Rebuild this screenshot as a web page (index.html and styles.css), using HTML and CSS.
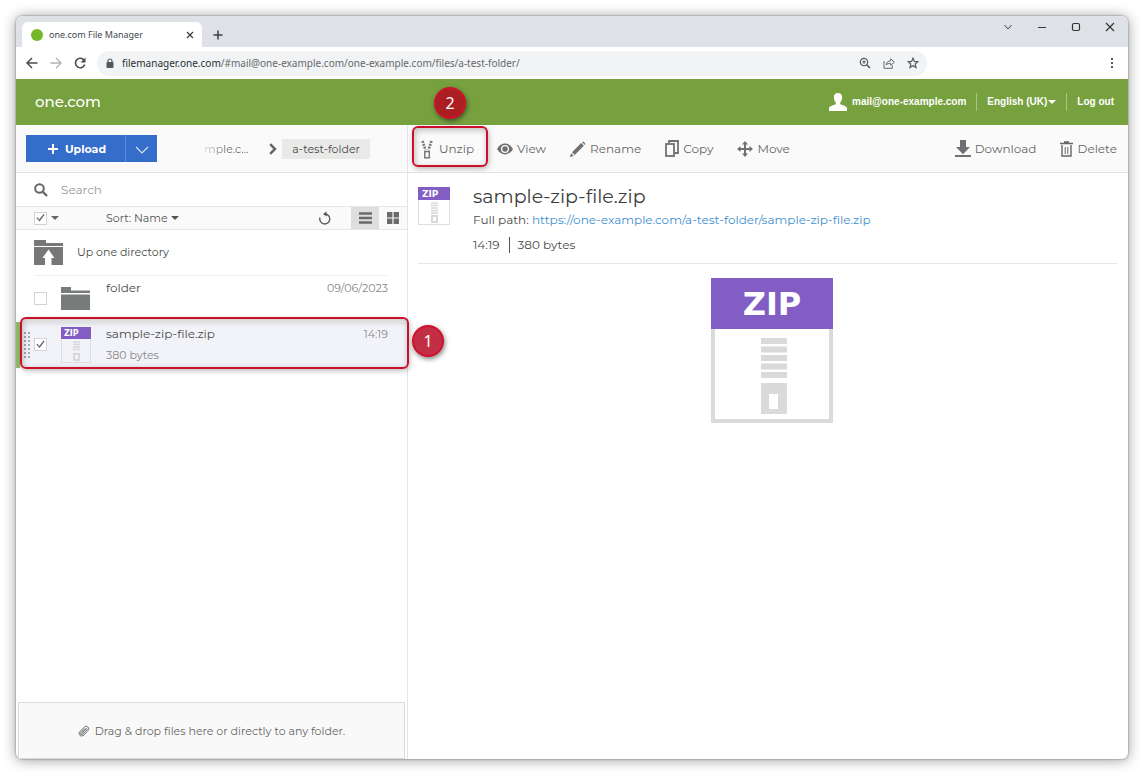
FILE: index.html
```html
<!DOCTYPE html>
<html lang="en">
<head>
<meta charset="utf-8">
<title>one.com File Manager</title>
<link rel="stylesheet" href="styles.css">
</head>
<body>
<div class="window">
  <header class="tabstrip">
    <div class="tab">
      <span class="favicon"></span>
      <span class="tab-title">one.com File Manager</span>
      <button class="plain" aria-label="Close tab"><svg width="8" height="8" viewBox="0 0 8 8"><path d="M1 1l6 6M7 1l-6 6" stroke="#3c4043" stroke-width="1.300"/></svg></button>
    </div>
    <button class="plain new-tab" aria-label="New tab"><svg width="10" height="10" viewBox="0 0 10 10"><path d="M5 .5v9M.5 5h9" stroke="#3c4043" stroke-width="1.500"/></svg></button>
    <div class="window-buttons">
      <button class="plain" aria-label="Search tabs"><svg width="10" height="10" viewBox="0 0 10 10"><path d="M1.500 3L5 7l3.500-4" fill="none" stroke="#444"/></svg></button>
      <button class="plain" aria-label="Minimise"><svg width="10" height="10" viewBox="0 0 10 10"><path d="M1 5.500h8" stroke="#333"/></svg></button>
      <button class="plain" aria-label="Maximise"><svg width="10" height="10" viewBox="0 0 10 10"><rect x="1.500" y="1.500" width="7" height="7" rx="1.500" fill="none" stroke="#333" stroke-width="1.200"/></svg></button>
      <button class="plain" aria-label="Close"><svg width="10" height="10" viewBox="0 0 10 10"><path d="M1 1l8 8M9 1L1 9" stroke="#333" stroke-width="1.200"/></svg></button>
    </div>
  </header>

  <div class="navbar">
    <button class="plain" aria-label="Back"><svg width="12" height="12" viewBox="0 0 12 12"><path d="M11.500 6H1.500M6 1L1 6l5 5" fill="none" stroke="#4a4d51" stroke-width="1.500"/></svg></button>
    <button class="plain" aria-label="Forward"><svg width="12" height="12" viewBox="0 0 12 12"><path d="M.5 6h10M6 1l5 5-5 5" fill="none" stroke="#b0b2b5" stroke-width="1.300"/></svg></button>
    <button class="plain" aria-label="Reload"><svg width="12" height="12" viewBox="0 0 12 12"><path d="M10 3.200A4.700 4.700 0 1 0 10.700 7.500" fill="none" stroke="#4a4d51" stroke-width="1.600"/><path d="M11.500.5v5h-5z" fill="#4a4d51"/></svg></button>
    <div class="address">
      <svg width="8" height="11" viewBox="0 0 8 11"><path d="M2 5V3a2 2 0 0 1 4 0v2" fill="none" stroke="#55585c" stroke-width="1.200"/><rect x=".5" y="4" width="7" height="6" rx="1" fill="#55585c"/></svg>
      <span class="url"><span class="host">filemanager.one.com</span>/#mail@one-example.com/one-example.com/files/a-test-folder/</span>
      <button class="plain" aria-label="Zoom"><svg width="12" height="12" viewBox="0 0 12 12"><circle cx="5" cy="5" r="3.700" fill="none" stroke="#55585c" stroke-width="1.200"/><path d="M7.700 7.700l3.300 3.300" stroke="#55585c" stroke-width="1.600"/><path d="M5 3.200v3.600M3.200 5h3.600" stroke="#55585c"/></svg></button>
      <button class="plain" aria-label="Share"><svg width="12" height="12" viewBox="0 0 12 12"><path d="M1 4v7.300h8.300V8.500" fill="none" stroke="#66696d"/><path d="M3.200 8C3.600 5 5 4 7.700 3.900V1.800l3.700 3.400-3.700 3.200V6.400C5.600 6.400 4.200 6.800 3.200 8z" fill="none" stroke="#66696d"/></svg></button>
      <button class="plain" aria-label="Bookmark"><svg width="12" height="12" viewBox="0 0 12 12"><path d="M6 1.200l1.400 3.200 3.500.3-2.700 2.300.8 3.500L6 8.700l-3 1.800L3.800 7 1.100 4.700l3.500-.3z" fill="none" stroke="#55585c" stroke-width="1.200"/></svg></button>
    </div>
    <button class="plain more" aria-label="Menu"><svg width="4" height="12" viewBox="0 0 4 12"><path d="M1 1h2v2H1zM1 5h2v2H1zM1 9h2v2H1z" fill="#55585c"/></svg></button>
  </div>

  <div class="brandbar">
    <span class="brand">one.com</span>
    <span class="callout callout-two">2</span>
    <nav class="account">
      <a href="#account" class="user"><svg width="18" height="18" viewBox="0 0 18 18"><path d="M9 0c2.700 0 4.200 1.700 4.200 4.300 0 2.200-.9 4.200-2 5.200v1.800c2 1 6.800 1.500 6.800 4.200V18H0v-2.500c0-2.700 4.800-3.200 6.800-4.200V9.500c-1.100-1-2-3-2-5.200C4.800 1.700 6.300 0 9 0z" fill="#fff"/></svg>mail@one-example.com</a>
      <button class="language">English (UK)<span class="caret"></span></button>
      <a href="#logout" class="logout">Log out</a>
    </nav>
  </div>

  <div class="panes">
    <aside class="sidebar">
      <div class="side-tools">
        <div class="upload">
          <button class="upload-main"><svg width="10" height="10" viewBox="0 0 10 10"><path d="M5 0v10M0 5h10" stroke="#fff" stroke-width="2"/></svg>Upload</button>
          <button class="upload-more" aria-label="More upload options"><svg width="14" height="8" viewBox="0 0 14 8"><path d="M1 1l6 6 6-6" fill="none" stroke="#dce6f7" stroke-width="1.100"/></svg></button>
        </div>
        <nav class="crumbs">
          <a href="#root" class="crumb-cut">mple.c...</a>
          <svg width="8" height="12" viewBox="0 0 8 12"><path d="M1.200 1.200L6 6 1.200 10.800" fill="none" stroke="#666" stroke-width="2.500"/></svg>
          <a href="#folder" class="crumb-here">a-test-folder</a>
        </nav>
      </div>
      <label class="search">
        <svg width="14" height="14" viewBox="0 0 14 14"><circle cx="5.500" cy="5.500" r="4.300" fill="none" stroke="#666" stroke-width="2"/><path d="M8.800 8.800l4.200 4.200" stroke="#666" stroke-width="2.300"/></svg>
        <input type="search" placeholder="Search" aria-label="Search">
      </label>
      <div class="sortbar">
        <input type="checkbox" class="check" checked aria-label="Select all">
        <span class="caret"></span>
        <button class="plain sort">Sort: Name<span class="caret"></span></button>
        <button class="plain refresh" aria-label="Refresh"><svg width="12" height="14" viewBox="0 0 12 14"><path d="M1 6.500A5 5 0 1 0 6 3" fill="none" stroke="#555" stroke-width="1.300"/><path d="M7.500.5v5L4 3z" fill="#555"/></svg></button>
        <button class="plain view active" aria-label="List view"><svg width="13" height="12" viewBox="0 0 13 12"><path d="M0 1.500h13M0 6h13M0 10.500h13" stroke="#6b6b6b" stroke-width="2.400"/></svg></button>
        <button class="plain view" aria-label="Grid view"><svg width="12" height="12" viewBox="0 0 12 12"><path d="M0 0h5.400v5.400H0zM6.600 0H12v5.400H6.600zM0 6.600h5.400V12H0zM6.600 6.600H12V12H6.600z" fill="#6b6b6b"/></svg></button>
      </div>

      <ul class="files">
        <li class="row up">
          <svg width="29" height="25" viewBox="0 0 29 25"><path d="M0 0h12v3h17v3H0zM0 7h29v18H17.500v-7H20.500L14.500 9.500 8.500 18H11v7H0z" fill="#777"/></svg>
          <a href="#up">Up one directory</a>
        </li>
        <li class="row directory">
          <input type="checkbox" class="check" aria-label="Select folder">
          <svg class="thumb" width="30" height="23" viewBox="0 0 30 23"><path d="M0 0h10v3.500h19V6H0zM0 7.500h29V23H0z" fill="#777b7a"/></svg>
          <div class="info"><span class="name">folder</span></div>
          <time>09/06/2023</time>
        </li>
        <li class="row selected">
          <span class="grip"></span>
          <input type="checkbox" class="check" checked aria-label="Select sample-zip-file.zip">
          <svg class="thumb" width="30" height="36" viewBox="0 0 30 36">
            <rect x=".5" y=".5" width="29" height="35" fill="none" stroke="#dedede"/>
            <rect width="30" height="12" fill="#825dc3"/>
            <path d="M12 15h7M12 17.500h7M12 20h7M12 22.500h7" stroke="#d8d8d8" stroke-width="1.500"/>
            <rect x="13" y="27" width="5" height="6" fill="none" stroke="#d8d8d8" stroke-width="2"/>
            <text x="3" y="9" class="zip-text" font-size="8">ZIP</text>
          </svg>
          <div class="info"><span class="name">sample-zip-file.zip</span><span class="size">380 bytes</span></div>
          <time>14:19</time>
          <span class="outline"></span>
          <span class="callout callout-one">1</span>
        </li>
      </ul>

      <div class="dropzone">
        <svg width="12" height="12" viewBox="0 0 12 12"><path d="M3.500 8.300L7.900 4c.8-.8 1.700.2 1 1L4.700 9.100C3.200 10.500 1.700 9 3 7.500L7 3.400M9.500 6.300L6 9.900C3 12.700-.6 9.300 2 6.500L6.300 2.200C8.700-.2 12.300 3 9.900 5.700" fill="none" stroke="#555" stroke-width=".9"/></svg>
        Drag &amp; drop files here or directly to any folder.
      </div>
    </aside>

    <main class="detail">
      <div class="actions">
        <button class="action unzip"><svg width="12" height="19" viewBox="0 0 12 19"><path d="M1.500 1l3 9M10.500 1l-3 9" stroke="#777" stroke-width="2.600" stroke-dasharray="2 1" fill="none"/><rect x="3.800" y="11.500" width="4.500" height="6.300" fill="none" stroke="#777" stroke-width="1.500"/></svg>Unzip<span class="outline"></span></button>
        <button class="action"><svg width="16" height="12" viewBox="0 0 16 12"><path d="M0 6C4-1.200 12-1.200 16 6 12 13.200 4 13.200 0 6z" fill="#707070"/><circle cx="8" cy="6" r="4" fill="#fafafa"/><circle cx="8" cy="6" r="2.700" fill="#707070"/></svg>View</button>
        <button class="action"><svg width="16" height="16" viewBox="0 0 16 16"><path d="M0 16l1-3.800 2.800 2.800zM2 11.300L11.200 2.100 13.900 4.800 4.700 14zM12.100 1.200c1-1.600 4.200 1.400 2.700 2.700z" fill="#707070"/></svg>Rename</button>
        <button class="action"><svg width="14" height="17" viewBox="0 0 14 17"><path d="M4 3V1h9v12h-3" fill="none" stroke="#707070" stroke-width="1.800"/><rect x="1" y="4" width="8" height="12" fill="none" stroke="#707070" stroke-width="1.800"/></svg>Copy</button>
        <button class="action"><svg width="16" height="16" viewBox="0 0 16 16"><path d="M8 2v12M2 8h12" stroke="#707070" stroke-width="2"/><path d="M8 0l3 3.500H5zM8 16l3-3.500H5zM0 8l3.500-3v6zM16 8l-3.500-3v6z" fill="#707070"/></svg>Move</button>
        <button class="action download"><svg width="16" height="17" viewBox="0 0 16 17"><path d="M5 0h6v7h4l-7 7.300L1 7h4zM0 15h16v2H0z" fill="#707070"/></svg>Download</button>
        <button class="action"><svg width="13" height="16" viewBox="0 0 13 16"><path d="M0 2.500h13M4 1h5" stroke="#666" stroke-width="1.600"/><path d="M2 4v11h9V4" fill="none" stroke="#666" stroke-width="1.400"/><path d="M5.200 6v7M7.800 6v7" stroke="#666"/></svg>Delete</button>
      </div>

      <section class="content">
        <div class="summary">
          <svg width="32" height="38" viewBox="0 0 32 38">
            <rect x=".5" y=".5" width="31" height="37" fill="none" stroke="#dedede"/>
            <rect width="32" height="13" fill="#825dc3"/>
            <path d="M13 16h7M13 18.500h7M13 21h7M13 23.500h7M13 26h7" stroke="#d8d8d8" stroke-width="1.500"/>
            <rect x="14" y="29" width="5" height="6" fill="none" stroke="#d8d8d8" stroke-width="2"/>
            <text x="4" y="10" class="zip-text" font-size="9">ZIP</text>
          </svg>
          <div class="meta">
            <h1>sample-zip-file.zip</h1>
            <p>Full path: <a href="#file">https://one-example.com/a-test-folder/sample-zip-file.zip</a></p>
            <p class="facts"><span>14:19</span><span>380 bytes</span></p>
          </div>
        </div>
        <svg class="preview" width="122" height="145" viewBox="0 0 122 145">
          <rect x="2" y="2" width="118" height="141" fill="#fff" stroke="#dadada" stroke-width="4"/>
          <rect width="122" height="51" fill="#825dc3"/>
          <path d="M50 63h26M50 71.500h26M50 80h26M50 88.500h26M50 97h26" stroke="#dadada" stroke-width="6"/>
          <path fill-rule="evenodd" d="M50 105h26v31H50zM58 116v15h9v-15z" fill="#dadada"/>
          <text x="61" y="37" class="zip-text zip-large" text-anchor="middle">ZIP</text>
        </svg>
      </section>
    </main>
  </div>
</div>
</body>
</html>
```
FILE: styles.css
```css
* { box-sizing: border-box; }

body {
  margin: 0;
  padding: 16px;
  min-height: 100vh;
  display: flex;
  background: #fff;
  color: #4a4a4a;
  font: 12px/16px Montserrat, Inter, sans-serif;
}

button, input { font: inherit; color: inherit; }
button { border: 0; cursor: pointer; }
a { color: inherit; text-decoration: none; }
svg { flex: none; display: block; }
.plain { background: none; padding: 0; display: flex; align-items: center; justify-content: center; }
.zip-text { font-family: "DejaVu Sans", sans-serif; font-weight: bold; fill: #fff; }
.zip-large { font-size: 32px; }
.caret { border: 4px solid transparent; border-top-color: currentColor; border-bottom: 0; }

.window {
  flex: 1;
  min-width: 0;
  display: flex;
  flex-direction: column;
  background: #fff;
  border-radius: 6px;
  box-shadow: 0 0 2px rgba(0, 0, 0, .5), 0 1px 14px rgba(0, 0, 0, .4);
}

/* Browser frame */
.tabstrip {
  height: 31px;
  flex: none;
  display: flex;
  background: #dee1e6;
  border-radius: 6px 6px 0 0;
}
.tab {
  width: 180px;
  margin: 6px 0 0 6px;
  padding: 0 8px 0 9px;
  display: flex;
  align-items: center;
  gap: 6px;
  background: #fff;
  border-radius: 6px 6px 0 0;
  color: #45484c;
  font: 9px/12px "Noto Sans", sans-serif;
}
.favicon { width: 12px; height: 12px; border-radius: 50%; background: #76b82a; }
.tab-title { flex: 1; }
.new-tab { margin: 6px 0 0 11px; }
.window-buttons {
  margin: 0 13px 10px auto;
  display: flex;
  align-items: center;
  gap: 24px;
}
.navbar {
  height: 32px;
  flex: none;
  padding: 0 14px 0 10px;
  display: flex;
  align-items: center;
  gap: 12px;
}
.address {
  flex: 0 1 830px;
  height: 25px;
  margin-left: -1px;
  padding: 0 8px 0 9px;
  display: flex;
  align-items: center;
  gap: 12px;
  border-radius: 13px;
  background: #f1f3f4;
  color: #66696d;
  font: 10px/16px "Noto Sans", sans-serif;
}
.url { flex: 1; margin-left: -4px; white-space: nowrap; overflow: hidden; }
.host { color: #2c2f33; }
.more { margin-left: auto; }

/* Brand bar */
.brandbar {
  position: relative;
  height: 46px;
  flex: none;
  padding: 0 14px 0 19px;
  display: flex;
  align-items: center;
  justify-content: space-between;
  background: #77a13f;
  color: #fff;
}
.brand { font-size: 15px; line-height: 20px; font-weight: 500; }
.account {
  display: flex;
  align-items: center;
  font: bold 10px/18px "Liberation Sans", Arial, sans-serif;
}
.user { display: flex; align-items: center; gap: 5px; padding-right: 10px; }
.language {
  display: flex;
  align-items: center;
  gap: 1px;
  padding: 0 10px;
  background: none;
  border: solid #a9c487;
  border-width: 0 1px;
}
.logout { padding-left: 10px; }

/* Callouts */
.callout {
  position: absolute;
  z-index: 2;
  width: 32px;
  height: 32px;
  border: 2px solid #d0112b;
  border-radius: 50%;
  color: #fff;
  font: 16px/28px "Noto Sans", sans-serif;
  text-align: center;
  box-shadow: 1px 2px 5px rgba(0, 0, 0, .5);
}
.callout-one { right: -37px; top: 3px; background: #c22f45; }
.callout-two { left: 418px; top: 8px; background: #ab1f22; }
.outline {
  position: absolute;
  z-index: 1;
  border: 2px solid #cd1029;
  border-radius: 6px;
  box-shadow: 1px 2px 5px rgba(0, 0, 0, .25), inset 1px 2px 6px rgba(0, 0, 0, .25);
  pointer-events: none;
}

/* Panes */
.panes { flex: 1; display: flex; min-height: 0; }
.sidebar {
  flex: 0 0 392px;
  display: flex;
  flex-direction: column;
  border-right: 1px solid #e4e4e4;
}
.side-tools {
  height: 48px;
  flex: none;
  padding: 0 37px 0 10px;
  display: flex;
  align-items: center;
  justify-content: space-between;
  background: #fafafa;
  border-bottom: 1px solid #e2e2e2;
}
.upload { display: flex; height: 27px; background: #356dca; color: #fff; }
.upload button { background: none; display: flex; align-items: center; justify-content: center; }
.upload-main { width: 99px; padding: 0 0 0 3px; gap: 7px; font-size: 11px; font-weight: 700; }
.upload-more { width: 32px; padding: 3px 0 0; border-left: 1px solid #5d8ad6; }
.crumbs { display: flex; align-items: center; font-size: 11px; }
.crumb-cut {
  color: transparent;
  background: linear-gradient(90deg, #ddd, #666 22px);
  background-clip: text;
}
.crumbs svg { margin: 0 5px 0 21px; }
.crumb-here { padding: 2px 10px; background: #e9e9e8; }
.search { height: 33px; display: flex; align-items: center; gap: 13px; padding: 0 18px; }
.search input { flex: 1; min-width: 0; border: 0; padding: 0; outline: 0; background: none; }
.search input::placeholder { color: #999; opacity: 1; }
.sortbar {
  height: 24px;
  flex: none;
  display: flex;
  align-items: center;
  padding-left: 18px;
  background: #fafafa;
  border: solid #e6e6e6;
  border-width: 1px 0;
  color: #666;
  font-size: 11px;
}
.sortbar > .caret { margin-left: 4px; }
.sort { margin-left: 47px; gap: 3px; color: #555; }
.refresh { margin: 0 20px 0 auto; }
.view { width: 28px; height: 22px; }
.view.active { background: #dedede; }
.check {
  appearance: none;
  flex: none;
  width: 13px;
  height: 13px;
  margin: 0;
  border: 1px solid #d2d2d2;
  background: #fff;
  display: grid;
  place-items: center;
}
.check:checked::before {
  content: "";
  width: 9px;
  height: 9px;
  background: #666;
  clip-path: polygon(4% 50%, 16% 42%, 36% 66%, 84% 6%, 96% 14%, 40% 90%);
}

/* File list */
.files { flex: 1; margin: 0; padding: 0; list-style: none; }
.row { position: relative; height: 46px; display: flex; padding: 0 19px 0 18px; }
.row.up { gap: 14px; align-items: center; padding-bottom: 2px; font-size: 11px; }
.row.up::after { content: ""; position: absolute; inset: auto 19px 0; border-bottom: 1px solid #efefef; }
.row .check { margin: 16px 14px 0 0; }
.row .thumb { align-self: center; }
.row.directory { padding-bottom: 2px; }
.info { flex: 1; margin-left: 15px; display: flex; flex-direction: column; padding-top: 4px; gap: 5px; }
.size { color: #888; font-size: 11px; }
.row time { padding-top: 4px; color: #888; font-size: 11px; }
.row.selected { padding-left: 14px; background: #f2f3f8; border-left: 4px solid #91b969; }
.row.selected .outline { inset: -5px -2px -1px 0; }
.grip {
  position: absolute;
  left: 3px;
  top: 9px;
  width: 8px;
  height: 29px;
  background: radial-gradient(circle, #aaa 1px, transparent 1px) 0 0 / 4px 4px;
}
.dropzone {
  height: 57px;
  flex: none;
  margin: 0 2px;
  display: flex;
  align-items: center;
  justify-content: center;
  gap: 5px;
  background: #f9f9f9;
  border: 1px solid #dadada;
  color: #666;
  font-size: 11px;
}

/* Detail pane */
.detail { flex: 1; min-width: 0; }
.actions {
  height: 48px;
  display: flex;
  align-items: center;
  gap: 24px;
  padding: 0 11px 0 4px;
  background: #fafafa;
  border-bottom: 1px solid #e2e2e2;
  color: #666;
}
.action { display: flex; align-items: center; gap: 4px; padding: 0; background: none; white-space: nowrap; }
.unzip {
  position: relative;
  align-self: start;
  width: 76px;
  height: 41px;
  margin: 1px -15px 0 0;
  padding: 5px 0 0 9px;
  gap: 6px;
}
.unzip .outline { inset: 0; }
.download { margin-left: auto; }
.content { padding: 14px 11px 0 10px; display: flex; flex-direction: column; }
.summary { display: flex; gap: 23px; padding-bottom: 10px; border-bottom: 1px solid #e6e6e6; }
h1 { margin: 0 0 5px; color: #3c3c3c; font-size: 19px; line-height: 20px; font-weight: 400; }
p { margin: 0; }
p a { color: #3d8fd0; }
.facts { display: flex; margin-top: 9px; }
.facts span + span { margin-left: 9px; padding-left: 8px; border-left: 1px solid #555; }
.preview { align-self: center; margin: 14px 0 0 8px; }
```
